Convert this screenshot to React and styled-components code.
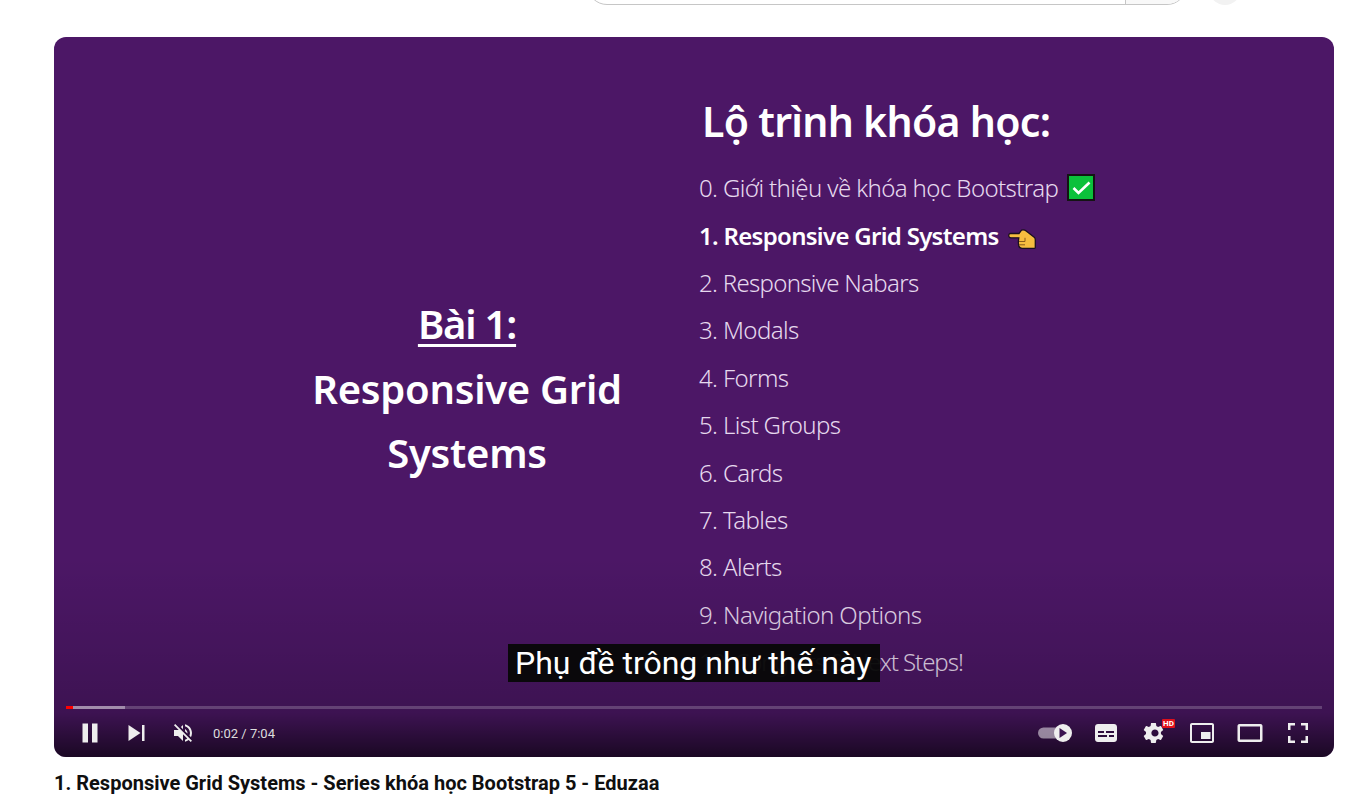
import React from "react";
import styled, { createGlobalStyle } from "styled-components";

const Global = createGlobalStyle`
  html, body {
    margin: 0;
    padding: 0;
    background: #fff;
    overflow: hidden;
    font-family: Roboto, "Liberation Sans", sans-serif;
  }
`;

const Page = styled.div`
  width: 1346px;
  height: 802px;
  overflow: hidden;
`;

const Masthead = styled.div`
  height: 37px;
  display: flex;
  align-items: flex-start;
  padding-left: 587px;
  box-sizing: border-box;
`;

const SearchClip = styled.div`
  height: 5px;
  display: flex;
  align-items: flex-end;
  gap: 22px;
`;

const SearchBox = styled.div`
  width: 600px;
  height: 40px;
  flex: none;
  display: flex;
  justify-content: flex-end;
  box-sizing: border-box;
  border: 1px solid #c6c6c6;
  border-radius: 0 0 20px 20px;
  overflow: hidden;
`;

const SearchButton = styled.div`
  width: 60px;
  background: #f8f8f8;
  border-left: 1px solid #c6c6c6;
`;

const MicButton = styled.div`
  width: 32px;
  height: 40px;
  flex: none;
  border-radius: 0 0 20px 20px;
  background: #f2f2f2;
`;

const Content = styled.div`
  padding-left: 54px;
`;

const Player = styled.div`
  position: relative;
  width: 1280px;
  height: 720px;
  border-radius: 12px;
  overflow: hidden;
  background: #4c1766;
`;

const Slide = styled.div`
  height: 100%;
  display: grid;
  grid-template-columns: 645px 1fr;
  font-family: "Noto Sans", "Open Sans", sans-serif;
  color: #fff;
`;

const LessonColumn = styled.div`
  padding: 255px 72px 0 253px;
  text-align: center;
  font-size: 40px;
  line-height: 64.5px;
  font-weight: 600;
  letter-spacing: -0.27px;
`;

const LessonLabel = styled.div`
  letter-spacing: -1.2px;
  text-decoration: underline;
  text-decoration-thickness: 3px;
  text-underline-offset: 5px;
`;

const RoadmapColumn = styled.div`
  padding-top: 55px;
`;

const RoadmapTitle = styled.h2`
  margin: 0 0 14px 3px;
  font-size: 41px;
  line-height: 58px;
  font-weight: 600;
  letter-spacing: -0.7px;
`;

const RoadmapList = styled.div`
  display: flex;
  flex-direction: column;
`;

const RoadmapItem = styled.div`
  height: 47.4px;
  display: flex;
  align-items: center;
  font-size: 24px;
  font-weight: ${(p) => (p.$current ? 600 : 300)};
  letter-spacing: ${(p) => p.$spacing}px;
  color: ${(p) => (p.$current ? "#fff" : "#e6d9ee")};
  white-space: nowrap;
`;

const CheckBadge = styled.svg`
  width: 28px;
  height: 27px;
  margin-left: 9px;
`;

const PointingHand = styled.svg`
  width: 28px;
  height: 20px;
  margin: 8px 0 0 9px;
`;

const BottomShade = styled.div`
  position: absolute;
  left: 0;
  right: 0;
  bottom: 0;
  height: 200px;
  background: linear-gradient(
    to bottom,
    rgba(0, 0, 0, 0) 0%,
    rgba(0, 0, 0, 0.1) 45%,
    rgba(0, 0, 0, 0.2) 78%,
    rgba(0, 0, 0, 0.65) 100%
  );
`;

const Caption = styled.div`
  position: absolute;
  left: 454px;
  top: 607px;
  height: 38px;
  padding: 0 9px 0 7px;
  background: rgba(8, 8, 8, 0.96);
  color: #fff;
  font-family: Roboto, "Liberation Sans", sans-serif;
  font-size: 32px;
  line-height: 38px;
  white-space: nowrap;
`;

const ProgressTrack = styled.div`
  position: absolute;
  left: 12px;
  right: 12px;
  top: 669px;
  height: 3px;
  background: rgba(255, 255, 255, 0.2);
`;

const ProgressFill = styled.div`
  position: absolute;
  left: 0;
  top: 0;
  height: 100%;
  background: ${(p) => p.$color};
`;

const Controls = styled.div`
  position: absolute;
  left: 12px;
  right: 12px;
  bottom: 0;
  height: 48px;
  display: flex;
  align-items: center;
  justify-content: space-between;
`;

const ControlGroup = styled.div`
  display: flex;
  align-items: center;
`;

const ControlButton = styled.div`
  position: relative;
  width: ${(p) => p.$width || 48}px;
  height: 48px;
  display: flex;
  align-items: center;
  justify-content: center;
  color: #eee;
`;

const TimeLabel = styled.div`
  margin-left: 6px;
  font-size: 13px;
  color: #ddd;
  font-family: Roboto, "Liberation Sans", sans-serif;
`;

const HdBadge = styled.span`
  position: absolute;
  top: 10px;
  right: 3px;
  width: 13px;
  height: 9px;
  border-radius: 1px;
  background: #e1101c;
  color: #fff;
  font-size: 8px;
  font-weight: 700;
  line-height: 9px;
  text-align: center;
`;

const Icon = styled.svg`
  width: 36px;
  height: 36px;
  flex: none;
  fill: currentColor;
`;

const Title = styled.h1`
  margin: 15px 0 0;
  font-size: 20px;
  line-height: 22px;
  font-weight: 700;
  color: #0f0f0f;
  white-space: nowrap;
`;

const items = [
  { text: "0. Giới thiệu về khóa học Bootstrap", spacing: -0.6 },
  { text: "1. Responsive Grid Systems", spacing: -0.7 },
  { text: "2. Responsive Nabars", spacing: -0.7 },
  { text: "3. Modals", spacing: -0.6 },
  { text: "4. Forms", spacing: -0.6 },
  { text: "5. List Groups", spacing: -0.6 },
  { text: "6. Cards", spacing: -0.6 },
  { text: "7. Tables", spacing: -0.6 },
  { text: "8. Alerts", spacing: -0.6 },
  { text: "9. Navigation Options", spacing: -0.6 },
  { text: "10. Congrats & Next Steps!", spacing: -1.05 },
];

const App = () => {
  return (
    <Page>
      <Global />
      <Masthead>
        <SearchClip>
          <SearchBox>
            <SearchButton />
          </SearchBox>
          <MicButton />
        </SearchClip>
      </Masthead>
      <Content>
        <Player>
          <Slide>
            <LessonColumn>
              <LessonLabel>Bài 1:</LessonLabel>
              <div>Responsive Grid Systems</div>
            </LessonColumn>
            <RoadmapColumn>
              <RoadmapTitle>Lộ trình khóa học:</RoadmapTitle>
              <RoadmapList>
                {items.map((item, i) => (
                  <RoadmapItem key={item.text} $current={i === 1} $spacing={item.spacing}>
                    {item.text}
                    {i === 0 && (
                      <CheckBadge viewBox="0 0 28 27">
                        <rect x="1" y="1" width="26" height="25" fill="#0bc13b" stroke="#141414" strokeWidth="2" />
                        <path d="M6.500 14l5 5L22.500 8.500" fill="none" stroke="#fff" strokeWidth="2.600" />
                      </CheckBadge>
                    )}
                    {i === 1 && (
                      <PointingHand viewBox="0 0 28 20">
                        <path
                          d="M2.500 4.500H11L13.500 1.200C15 .6 17 1 18.500 2.200L26.500 8.500C27.300 9.200 27.300 10 27.300 11V18.500C27.300 19 27 19.300 26.500 19.300H14C12.500 19.300 11.200 18.500 10.800 17C10.300 15 10.300 11.500 10.800 8.800H3C1.500 8.800 .7 7.800 .7 6.600C.7 5.500 1.300 4.500 2.500 4.500Z"
                          fill="#f6bd3f"
                          stroke="#1b1020"
                          strokeWidth="1.300"
                        />
                        <path d="M11 12.500h6M11 15.800h6M17 8.800v3.700" fill="none" stroke="#8a5a1c" strokeWidth="1" />
                      </PointingHand>
                    )}
                  </RoadmapItem>
                ))}
              </RoadmapList>
            </RoadmapColumn>
          </Slide>
          <BottomShade />
          <Caption>Phụ đề trông như thế này</Caption>
          <ProgressTrack>
            <ProgressFill $color="rgba(255,255,255,0.4)" style={{ width: "4.7%" }} />
            <ProgressFill $color="#f00" style={{ width: "0.55%" }} />
          </ProgressTrack>
          <Controls>
            <ControlGroup>
              <ControlButton $width={47}>
                <Icon viewBox="0 0 36 36"><path d="M10.500 8.500h5.500v19h-5.500zM20 8.500h5.500v19H20z" /></Icon>
              </ControlButton>
              <ControlButton $width={47}>
                <Icon viewBox="0 0 36 36"><path d="M9.500 10l12 8-12 8zM23 10h2.500v16H23z" /></Icon>
              </ControlButton>
              <ControlButton $width={47}>
                <Icon viewBox="0 0 36 36">
                  <path d="M21.480 17.980c0-1.770-1.020-3.290-2.500-4.030v2.210l2.450 2.450c.03-.2.05-.41.05-.63zm2.500 0c0 .94-.2 1.820-.54 2.640l1.510 1.510c.66-1.240 1.030-2.650 1.030-4.150 0-4.280-2.990-7.860-7-8.760v2.050c2.890.86 5 3.540 5 6.710zM9.250 8.980l-1.270 1.260 4.720 4.730H7.980v6h4l5 5v-6.730l4.250 4.250c-.67.52-1.420.93-2.250 1.180v2.060c1.380-.31 2.630-.95 3.690-1.810l2.040 2.050 1.270-1.270-9-9-7.730-7.720zm7.730.99l-2.090 2.080 2.090 2.090V9.970z" />
                </Icon>
              </ControlButton>
              <TimeLabel>0:02 / 7:04</TimeLabel>
            </ControlGroup>
            <ControlGroup>
              <ControlButton $width={54}>
                <Icon viewBox="0 0 36 36">
                  <rect x="1" y="12.500" width="24" height="11" rx="5.500" fill="rgba(255,255,255,0.5)" />
                  <circle cx="26" cy="18" r="9" />
                  <path d="M22.500 13v10l7.500-5z" fill="#3a1350" />
                </Icon>
              </ControlButton>
              <ControlButton>
                <Icon viewBox="0 0 36 36">
                  <path fillRule="evenodd" d="M10 9h16c1.700 0 3 1.300 3 3v12c0 1.700-1.300 3-3 3H10c-1.700 0-3-1.300-3-3V12c0-1.700 1.300-3 3-3zm0 7v2h6v-2zm8 0v2h8v-2zm-8 4v2h9v-2zm11 0v2h5v-2z" />
                </Icon>
              </ControlButton>
              <ControlButton>
                <Icon viewBox="0 0 36 36">
                  <path transform="translate(1 0)" d="M23.900 18.980c.04-.32.06-.64.06-.98s-.02-.66-.07-.98l2.110-1.650c.19-.15.24-.42.12-.64l-2-3.460c-.12-.22-.37-.29-.59-.22l-2.490 1c-.52-.4-1.080-.73-1.700-.98l-.37-2.650c-.04-.24-.25-.42-.5-.42h-4c-.25 0-.45.18-.49.42l-.37 2.650c-.62.25-1.180.59-1.700.98l-2.490-1c-.22-.08-.47 0-.59.22l-2 3.460c-.12.22-.08.49.12.64l2.110 1.650c-.05.32-.09.65-.09.98s.02.66.07.98l-2.110 1.650c-.19.15-.24.42-.12.64l2 3.460c.12.22.37.29.59.22l2.490-1c.52.4 1.080.73 1.700.98l.37 2.650c.05.24.24.42.49.42h4c.25 0 .46-.18.49-.42l.37-2.650c.62-.25 1.180-.59 1.700-.98l2.490 1c.22.08.47 0 .59-.22l2-3.460c.12-.22.07-.49-.12-.64zM17.960 21.600c-1.980 0-3.600-1.620-3.600-3.600s1.620-3.600 3.600-3.600 3.600 1.620 3.600 3.600-1.620 3.600-3.600 3.600z" />
                </Icon>
                <HdBadge>HD</HdBadge>
              </ControlButton>
              <ControlButton>
                <Icon viewBox="0 0 36 36">
                  <path fillRule="evenodd" d="M8 8h20c1.100 0 2 .9 2 2v16c0 1.100-.9 2-2 2H8c-1.100 0-2-.9-2-2V10c0-1.100.9-2 2-2zm0 2v16h20V10zm9 7h9.500v7H17z" />
                </Icon>
              </ControlButton>
              <ControlButton>
                <Icon viewBox="0 0 36 36">
                  <path fillRule="evenodd" d="M7.500 9h21c1.100 0 2 .9 2 2v14c0 1.100-.9 2-2 2h-21c-1.100 0-2-.9-2-2V11c0-1.100.9-2 2-2zm.5 2.500v13h20v-13z" />
                </Icon>
              </ControlButton>
              <ControlButton>
                <Icon viewBox="0 0 36 36">
                  <path d="M8 15h2.500v-4.500H15V8H8zM21 8v2.500h4.500V15H28V8zM25.500 25.500H21V28h7v-7h-2.500zM10.500 21H8v7h7v-2.500h-4.500z" />
                </Icon>
              </ControlButton>
            </ControlGroup>
          </Controls>
        </Player>
        <Title>1. Responsive Grid Systems - Series khóa học Bootstrap 5 - Eduzaa</Title>
      </Content>
    </Page>
  );
};

export default App;
